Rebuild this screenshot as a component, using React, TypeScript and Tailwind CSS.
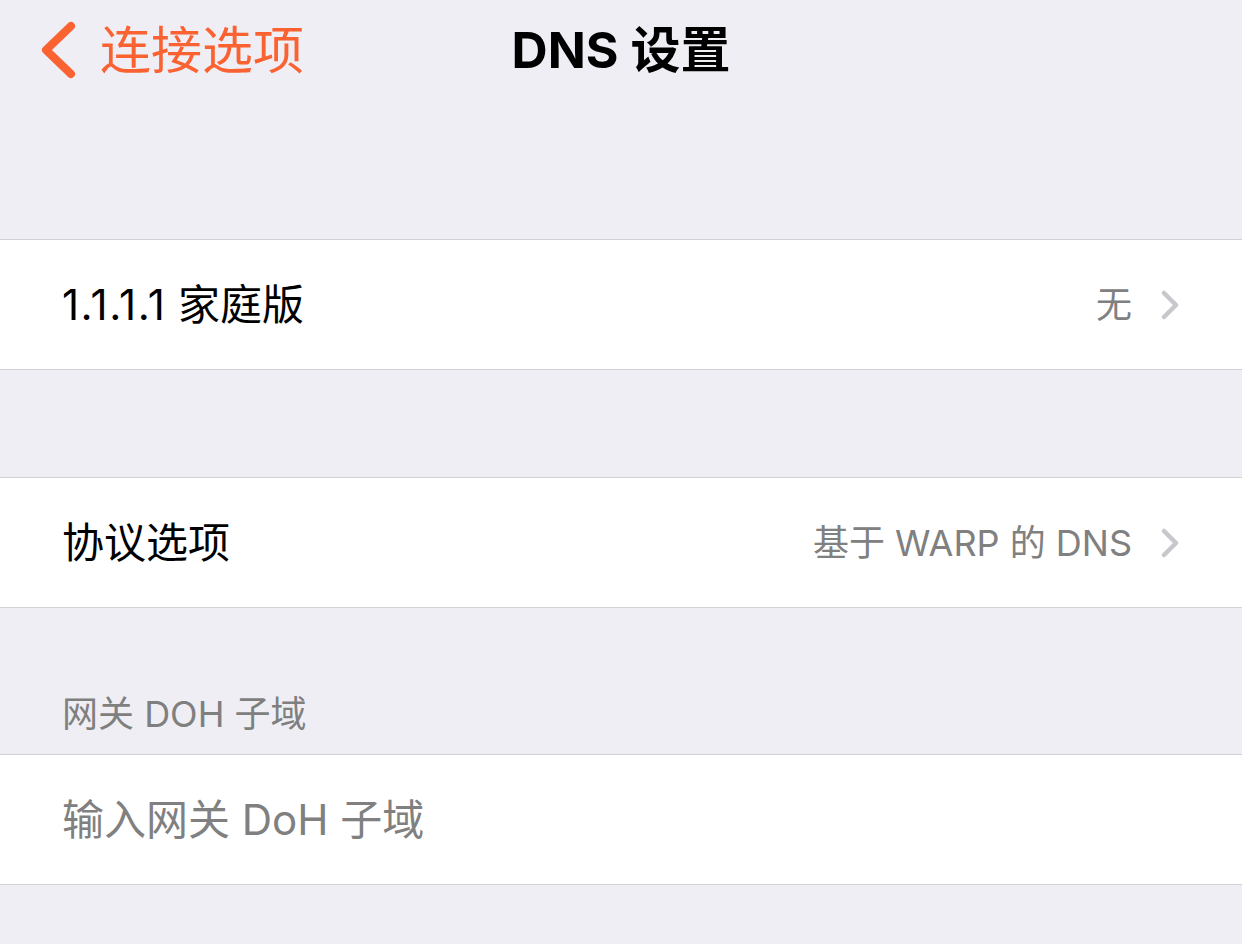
import { ReactNode } from 'react'

const FONT = 'font-[Inter,"Noto_Sans_CJK_SC",sans-serif]'

function Chevron() {
  return (
    <svg width="22" height="30" viewBox="0 0 22 30" className="shrink-0">
      <path d="M4 3 L16 15 L4 27" fill="none" stroke="#c7c7cc" strokeWidth="4.5" strokeLinecap="round" strokeLinejoin="round" />
    </svg>
  )
}

function Row({ label, value, muted }: { label: ReactNode; value?: string; muted?: boolean }) {
  return (
    <div className="flex h-[131px] items-center border-y border-[#d1d1d6] bg-white pl-[62px] pr-[60px]">
      <span className={`flex-1 text-[42px] ${muted ? 'text-[#808080]' : 'text-black'}`}>{label}</span>
      {value !== undefined && (
        <div className="flex items-center gap-[28px]">
          <span className="text-[36px] text-[#808080]">{value}</span>
          <Chevron />
        </div>
      )}
    </div>
  )
}

function Gap({ h, children }: { h: string; children?: ReactNode }) {
  return <div className={h}>{children}</div>
}

export default function App() {
  return (
    <div className={`flex min-h-[944px] w-[1242px] flex-col overflow-hidden bg-[#efeef4] ${FONT}`}>
      {/* nav bar */}
      <div className="grid h-[105px] grid-cols-[1fr_auto_1fr] items-center pb-[5px]">
        <div className="flex items-center gap-[22px] pl-[40px] text-[#fb6232]">
          <svg width="38" height="58" viewBox="0 0 38 58">
            <path d="M31 5 L6 29 L31 53" fill="none" stroke="currentColor" strokeWidth="8" strokeLinecap="round" strokeLinejoin="round" />
          </svg>
          <span className="text-[51px] leading-none">连接选项</span>
        </div>
        <h1 className="text-[50px] font-bold leading-none text-black">DNS 设置</h1>
        <div />
      </div>

      <Gap h="h-[134px]" />
      <Row label={<><span className="tracking-[1.5px]">1.1.1.1</span> 家庭版</>} value="无" />
      <Gap h="h-[107px]" />
      <Row label="协议选项" value="基于 WARP 的 DNS" />
      <Gap h="h-[146px]">
        <div className="flex h-full items-end pb-[13px] pl-[62px] text-[36px] text-[#7f7f7f]">网关 DOH 子域</div>
      </Gap>
      <Row label="输入网关 DoH 子域" muted />
      <div className="flex-1" />
    </div>
  )
}
